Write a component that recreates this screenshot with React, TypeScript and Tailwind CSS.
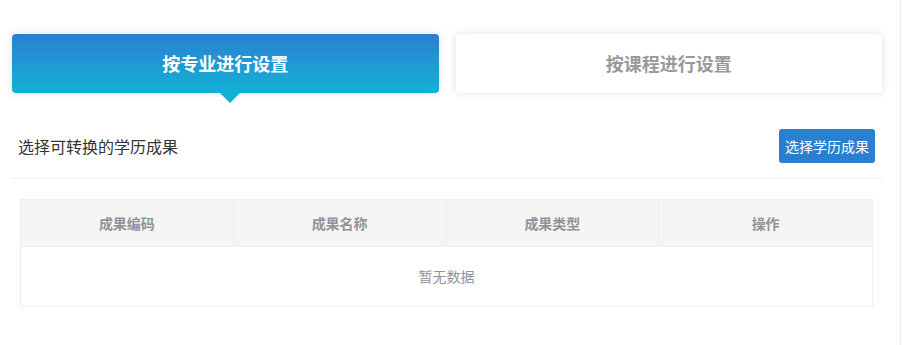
import React from "react";

const cjk = { fontFamily: '"Noto Sans CJK SC", "Noto Sans", sans-serif' };

const columns = ["成果编码", "成果名称", "成果类型", "操作"];

export default function App() {
  return (
    <div className="flex w-[904px] h-[345px] bg-white overflow-hidden" style={cjk}>
      <div className="w-[901px] h-full border-r border-[#ececec] pl-[12px] pt-[34px]">
        {/* Tabs */}
        <div className="grid grid-cols-2 gap-[17px] w-[870px]">
          <div className="relative h-[59px] rounded-[4px] bg-gradient-to-b from-[#2a7fd1] to-[#0fb1d5] shadow-[0_0_8px_rgba(0,0,0,0.12)] flex items-center justify-center">
            <span className="text-white text-[18px] font-bold">按专业进行设置</span>
            <div className="absolute left-[208px] top-full w-0 h-0 border-l-[10px] border-r-[10px] border-t-[10px] border-l-transparent border-r-transparent border-t-[#0fb1d5]" />
          </div>
          <div className="h-[59px] rounded-[4px] bg-white shadow-[0_0_8px_rgba(0,0,0,0.12)] flex items-center justify-center">
            <span className="text-[#999999] text-[18px] font-bold">按课程进行设置</span>
          </div>
        </div>

        {/* Toolbar */}
        <div className="w-[870px] mt-[36px] flex items-center justify-between pl-[6px] pr-[7px]">
          <span className="text-[16px] text-[#333333]">选择可转换的学历成果</span>
          <button className="h-[34px] w-[96px] rounded-[3px] bg-[#2b7fd0] text-white text-[14px]">
            选择学历成果
          </button>
        </div>
        <div className="w-[870px] h-px bg-[#eeeeee] mt-[15px]" />

        {/* Table */}
        <div className="ml-[8px] mt-[20px] w-[853px] border border-[#ebeef5]">
          <div className="grid grid-cols-4 h-[47px] bg-[#f5f5f5] border-b border-[#ebeef5]">
            {columns.map((c, i) => (
              <div
                key={c}
                className={`flex items-center justify-center text-[14px] font-bold text-[#909399] ${i < 3 ? "border-r border-[#ebeef5]" : ""}`}
              >
                {c}
              </div>
            ))}
          </div>
          <div className="h-[59px] flex items-center justify-center text-[14px] text-[#909399]">
            暂无数据
          </div>
        </div>
      </div>
    </div>
  );
}
